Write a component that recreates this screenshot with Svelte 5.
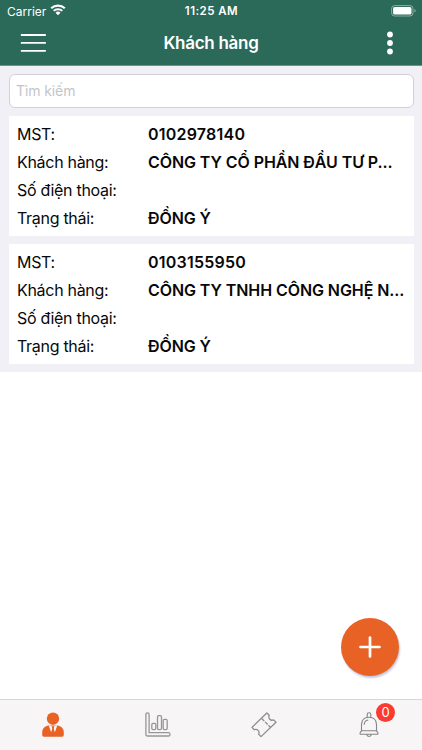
<script lang="ts">
    type Customer = { mst: string; name: string; phone: string; status: string };

    const customers: Customer[] = [
        { mst: "0102978140", name: "CÔNG TY CỔ PHẦN ĐẦU TƯ P...", phone: "", status: "ĐỒNG Ý" },
        { mst: "0103155950", name: "CÔNG TY TNHH CÔNG NGHỆ N...", phone: "", status: "ĐỒNG Ý" },
    ];

    let search = $state("");
    let notifications = $state(0);
</script>

<div class="screen">
    <header>
        <div class="status-bar">
            <div class="carrier">
                <span>Carrier</span>
                <svg width="16" height="12" viewBox="0 0 16 12" fill="none" stroke="#fff">
                    <path d="M1.2 4.3a9.8 9.8 0 0 1 13.6 0" stroke-width="2.2" />
                    <path d="M3.7 6.9a6.2 6.2 0 0 1 8.6 0" stroke-width="2" />
                    <path d="M8 11.3L5.5 8.8a3.6 3.6 0 0 1 5 0z" fill="#fff" stroke="none" />
                </svg>
            </div>
            <span class="time">11:25 AM</span>
            <svg class="battery" width="25" height="12" viewBox="0 0 25 12">
                <rect x=".6" y=".6" width="21.4" height="10.4" rx="3" fill="none" stroke="#fff" stroke-opacity=".45" />
                <rect x="2.1" y="2.1" width="18.4" height="7.4" rx="1.6" fill="#fff" />
                <path d="M23.5 4v3.6q1.2-.5 1.2-1.8t-1.2-1.8z" fill="#fff" fill-opacity=".5" />
            </svg>
        </div>
        <div class="nav-bar">
            <button class="menu" aria-label="Menu">
                <svg width="26" height="20" viewBox="0 0 26 20" stroke="#fff" stroke-width="1.8" stroke-linecap="round">
                    <path d="M1.6 2h23.6M1.6 9.9h23.6M1.6 17.8h23.6" />
                </svg>
            </button>
            <h1>Khách hàng</h1>
            <button class="more" aria-label="More">
                <svg width="6" height="24" viewBox="0 0 6 24" fill="#fff">
                    <circle cx="3" cy="3.5" r="2.9" />
                    <circle cx="3" cy="12" r="2.9" />
                    <circle cx="3" cy="20.5" r="2.9" />
                </svg>
            </button>
        </div>
    </header>

    <main>
        <div class="list">
            <input type="text" placeholder="Tìm kiếm" bind:value={search} />
            {#each customers as customer}
                <div class="card">
                    <div class="row"><span class="label">MST:</span><b class="number">{customer.mst}</b></div>
                    <div class="row"><span class="label">Khách hàng:</span><b>{customer.name}</b></div>
                    <div class="row"><span class="label">Số điện thoại:</span><b>{customer.phone}</b></div>
                    <div class="row"><span class="label">Trạng thái:</span><b>{customer.status}</b></div>
                </div>
            {/each}
        </div>
        <button class="fab" aria-label="Add">
            <svg width="22" height="22" viewBox="0 0 22 22" stroke="#fff" stroke-width="2.7" stroke-linecap="round">
                <path d="M11 1.5v19M1.5 11h19" />
            </svg>
        </button>
    </main>

    <nav class="tabs">
        <button aria-label="Khách hàng">
            <svg width="24" height="26" viewBox="0 0 24 26">
                <ellipse cx="12" cy="6.7" rx="6.2" ry="6.2" fill="#e86225" />
                <path d="M1.2 23v-2c0-4.2 2-6.5 5.8-7.4h10c3.8.9 5.8 3.2 5.8 7.4v2q0 1.7-1.7 1.7H2.9q-1.7 0-1.7-1.7z" fill="#e86225" />
                <path d="M7.7 13.3l4.3 1.2 4.3-1.2-2.5 7.2-1.8-4.2-1.8 4.2z" fill="#f7f5f6" />
                <path d="M10.7 14.3h2.6l-.5 2.1 1 5.2-1.8 2-1.8-2 1-5.2z" fill="#e86225" />
            </svg>
        </button>
        <button aria-label="Báo cáo">
            <svg width="26" height="26" viewBox="0 0 26 26" fill="none" stroke="#969696" stroke-width="1.3">
                <path d="M.9 2.5q0-1.6 1.6-1.6t1.6 1.6v18.2h19.2q1.7 0 1.7 1.7T23.3 24H2.5Q.9 24 .9 22.4z" />
                <rect x="6.8" y="11.4" width="4" height="6.2" rx="1.3" />
                <rect x="12.5" y="3.6" width="4" height="14" rx="1.3" />
                <rect x="18.2" y="7.4" width="4" height="10.2" rx="1.3" />
            </svg>
        </button>
        <button aria-label="Phiếu">
            <svg width="26" height="26" viewBox="0 0 26 26" fill="none" stroke="#8e8e8e" stroke-width="1.3" stroke-linejoin="round">
                <path d="M1 15.4L15.8 1l2.4 2.3c-1.2 3.2 1.3 5.8 4.4 4.6L25 10.3 10 24.6l-2.3-2.3c1.2-3.2-1.3-5.8-4.4-4.6z" />
                <path d="M10.7 6.5l8.9 9" stroke-dasharray="3.7 1.1" />
            </svg>
        </button>
        <button class="bell" aria-label="Thông báo">
            <svg width="20" height="26" viewBox="0 0 20 26" fill="none" stroke="#858585" stroke-width="1.1" stroke-linejoin="round">
                <path d="M8.2 5.4V2.5a1.8 1.8 0 0 1 3.6 0v2.9" />
                <path d="M2.5 18.6v-6.2C2.5 8 5.5 5.3 10 5.3s7.5 2.7 7.5 7.1v6.2l1.3 2.2q.7 1.5-.9 1.5H2.1q-1.6 0-.9-1.5z" />
                <path d="M2.5 18.7h15M5.2 12.8c0-2.6 1.5-4.4 4-4.8M7.4 22.5q2.6 4 5.2 0" />
            </svg>
            <span class="badge">{notifications}</span>
        </button>
    </nav>
</div>

<style>
    :global(body) {
        margin: 0;
        background: #fff;
    }

    .screen {
        display: flex;
        flex-direction: column;
        width: 422px;
        height: 750px;
        overflow: hidden;
        font-family: Inter, "Noto Sans", sans-serif;
        color: #080808;
    }

    button {
        display: flex;
        align-items: center;
        justify-content: center;
        padding: 0;
        border: none;
        background: none;
        font: inherit;
    }

    svg {
        display: block;
        flex: none;
    }

    header {
        flex: none;
        height: 65px;
        border-bottom: 1px solid #6c9588;
        background: #2b6959;
        color: #fff;
    }

    .status-bar {
        display: grid;
        grid-template-columns: 1fr auto 1fr;
        align-items: center;
        height: 21px;
        padding: 0 6px 0 7px;
        font-size: 12px;
    }

    .carrier {
        display: flex;
        align-items: center;
        gap: 4px;
        padding-top: 1px;
    }

    .carrier svg {
        margin-top: -2px;
    }

    .time {
        padding-top: 1px;
        font-size: 11.5px;
        font-weight: 600;
        letter-spacing: 0.45px;
    }

    .battery {
        justify-self: end;
    }

    .nav-bar {
        display: grid;
        grid-template-columns: 60px 1fr 60px;
        align-items: center;
        height: 44px;
    }

    .menu {
        margin-left: 6px;
    }

    h1 {
        margin: 0;
        text-align: center;
        font-size: 17px;
        font-weight: 600;
        letter-spacing: -0.28px;
    }

    .more {
        margin-right: 4px;
    }

    main {
        position: relative;
        flex: 1;
    }

    .list {
        display: flex;
        flex-direction: column;
        gap: 8px;
        padding: 8px 8.5px;
        background: #f1f0f7;
    }

    input {
        box-sizing: border-box;
        height: 34px;
        width: 100%;
        padding: 0 6.5px 2px;
        border: 1px solid #d2d1d6;
        border-radius: 6px;
        outline: none;
        background: #fff;
        font-family: inherit;
        font-size: 14px;
        letter-spacing: -0.1px;
    }

    input::placeholder {
        color: #c5c5c8;
        opacity: 1;
    }

    .card {
        height: 112px;
        padding: 4px 5px 4px 8.5px;
        background: #fff;
    }

    .row {
        display: grid;
        grid-template-columns: 131px 1fr;
        align-items: center;
        height: 28px;
        font-size: 16px;
        white-space: nowrap;
    }

    .label {
        letter-spacing: -0.3px;
    }

    b {
        font-weight: 600;
        letter-spacing: -0.08px;
    }

    .number {
        letter-spacing: 0.22px;
    }

    .fab {
        position: absolute;
        right: 23px;
        bottom: 23px;
        width: 58px;
        height: 58px;
        border-radius: 50%;
        background: #e86225;
        box-shadow: 1px 2px 2px #c9c5d8;
    }

    .tabs {
        display: grid;
        grid-template-columns: repeat(4, 1fr);
        flex: none;
        height: 50px;
        border-top: 1px solid #d7d6d7;
        background: #f7f5f6;
    }

    .bell {
        position: relative;
    }

    .badge {
        position: absolute;
        top: 2.5px;
        left: 59.5px;
        width: 19px;
        height: 19px;
        border-radius: 50%;
        background: #fb3a30;
        color: #fff;
        font-size: 13px;
        line-height: 19px;
        text-align: center;
    }
</style>
